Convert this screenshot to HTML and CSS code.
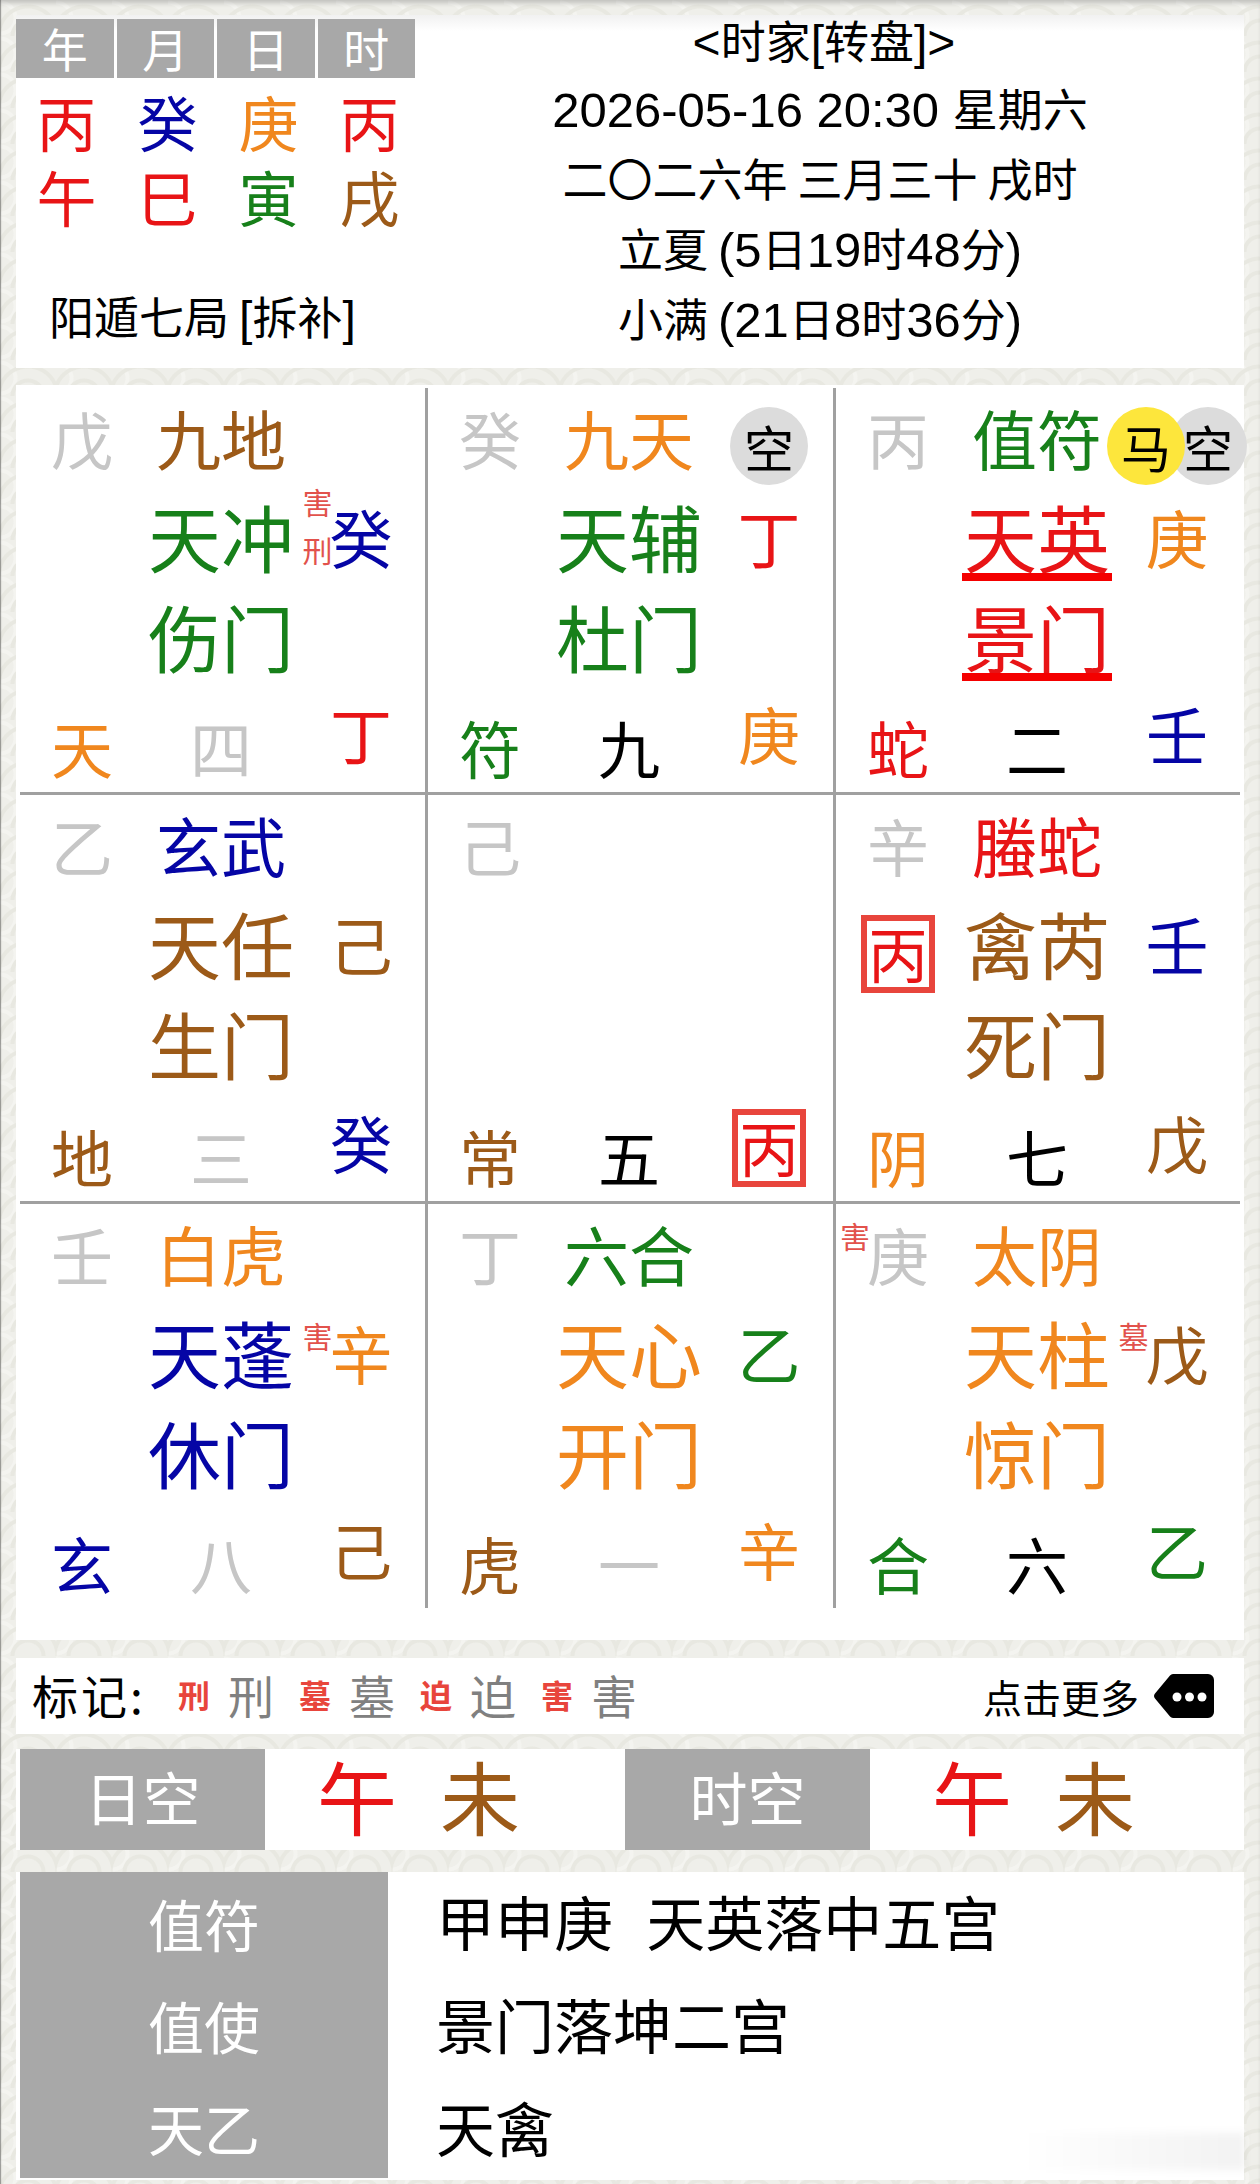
FILE: index.html
```html
<!DOCTYPE html>
<html lang="zh-CN">
<head>
  <meta charset="UTF-8" />
  <meta name="viewport" content="width=device-width, initial-scale=1.0"/>
  <title>时家转盘</title>
  <link rel="stylesheet" href="styles.css">
</head>
<body>
  <div class="page">

    <div class="panel top">
      <div class="bazi">
        <div class="bazi-head">
          <span>年</span><span>月</span><span>日</span><span>时</span>
        </div>
        <div class="bazi-body">
          <span class="red">丙</span><span class="blue">癸</span><span class="orange">庚</span><span class="red">丙</span>
          <span class="red">午</span><span class="red">巳</span><span class="green">寅</span><span class="brown">戌</span>
        </div>
        <div class="ju">阳遁七局 <span class="latin">[</span>拆补<span class="latin">]</span></div>
      </div>
      <div class="info-lines">
        <div class="title-line"><span class="latin">&lt;</span>时家<span class="latin">[</span>转盘<span class="latin">]&gt;</span></div>
        <div><span class="num">2026-05-16 20:30 </span>星期六</div>
        <div>二〇二六年 三月三十 戌时</div>
        <div>立夏 <span class="num">(5</span>日<span class="num">19</span>时<span class="num">48</span>分<span class="num">)</span></div>
        <div>小满 <span class="num">(21</span>日<span class="num">8</span>时<span class="num">36</span>分<span class="num">)</span></div>
      </div>
    </div>

    <div class="panel board">
      <!-- 巽四 -->
      <div class="cell">
        <span class="t gray">戊</span><span class="god brown">九地</span><span></span>
        <span></span><span class="star green">天冲</span><span class="g"><b class="blue">癸<i class="mark m-hai">害</i><i class="mark m-xing">刑</i></b></span>
        <span></span><span class="star green">伤门</span><span></span>
        <span class="b orange">天</span><span class="b gray">四</span><span class="b up red">丁</span>
      </div>
      <!-- 离九 -->
      <div class="cell">
        <span class="t gray">癸</span><span class="god orange">九天</span><span class="badges"><em class="kong">空</em></span>
        <span></span><span class="star green">天辅</span><span class="g red">丁</span>
        <span></span><span class="star green">杜门</span><span></span>
        <span class="b green">符</span><span class="b black">九</span><span class="b up orange">庚</span>
      </div>
      <!-- 坤二 -->
      <div class="cell no-right">
        <span class="t gray">丙</span><span class="god green">值符</span><span class="badges"><em class="ma">马</em><em class="kong">空</em></span>
        <span></span><span class="star red"><u>天英</u></span><span class="g orange">庚</span>
        <span></span><span class="star red"><u>景门</u></span><span></span>
        <span class="b red">蛇</span><span class="b black">二</span><span class="b up blue">壬</span>
      </div>
      <!-- 震三 -->
      <div class="cell">
        <span class="t gray">乙</span><span class="god blue">玄武</span><span></span>
        <span></span><span class="star brown">天任</span><span class="g brown">己</span>
        <span></span><span class="star brown">生门</span><span></span>
        <span class="b brown">地</span><span class="b gray">三</span><span class="b up blue">癸</span>
      </div>
      <!-- 中五 -->
      <div class="cell">
        <span class="t gray">己</span><span></span><span></span>
        <span></span><span></span><span></span>
        <span></span><span></span><span></span>
        <span class="b brown">常</span><span class="b black">五</span><span class="b up boxed-wrap red"><strong class="boxed">丙</strong></span>
      </div>
      <!-- 兑七 -->
      <div class="cell no-right">
        <span class="t gray">辛</span><span class="god red">螣蛇</span><span></span>
        <span class="g red low"><strong class="boxed">丙</strong></span><span class="star brown">禽芮</span><span class="g blue">壬</span>
        <span></span><span class="star brown">死门</span><span></span>
        <span class="b orange">阴</span><span class="b black">七</span><span class="b up brown">戊</span>
      </div>
      <!-- 艮八 -->
      <div class="cell no-bottom">
        <span class="t gray">壬</span><span class="god orange">白虎</span><span></span>
        <span></span><span class="star blue">天蓬</span><span class="g"><b class="orange">辛<i class="mark m-side">害</i></b></span>
        <span></span><span class="star blue">休门</span><span></span>
        <span class="b blue">玄</span><span class="b gray">八</span><span class="b up brown">己</span>
      </div>
      <!-- 坎一 -->
      <div class="cell no-bottom">
        <span class="t gray">丁</span><span class="god green">六合</span><span></span>
        <span></span><span class="star orange">天心</span><span class="g green">乙</span>
        <span></span><span class="star orange">开门</span><span></span>
        <span class="b brown">虎</span><span class="b gray">一</span><span class="b up orange">辛</span>
      </div>
      <!-- 乾六 -->
      <div class="cell no-right no-bottom">
        <span class="t"><b class="gray">庚<i class="mark m-top">害</i></b></span><span class="god orange">太阴</span><span></span>
        <span></span><span class="star orange">天柱</span><span class="g"><b class="brown">戊<i class="mark m-side">墓</i></b></span>
        <span></span><span class="star orange">惊门</span><span></span>
        <span class="b green">合</span><span class="b black">六</span><span class="b up green">乙</span>
      </div>
    </div>

    <div class="panel legend">
      <div class="legend-title">标记:</div>
      <div class="legend-items">
        <span class="tag"><small>刑</small>刑</span>
        <span class="tag"><small>墓</small>墓</span>
        <span class="tag"><small>迫</small>迫</span>
        <span class="tag"><small>害</small>害</span>
      </div>
      <div class="more">
        <span>点击更多</span>
        <svg class="more-icon" viewBox="0 0 60 44" width="60" height="44">
          <path d="M19 0H54a6 6 0 0 1 6 6V38a6 6 0 0 1-6 6H19a4 4 0 0 1-3-1.500L1 24.500a4 4 0 0 1 0-5L16 1.500A4 4 0 0 1 19 0Z" fill="#000"/>
          <circle cx="23" cy="23" r="4.500" fill="#fff"/>
          <circle cx="35.500" cy="23" r="4.500" fill="#fff"/>
          <circle cx="48" cy="23" r="4.500" fill="#fff"/>
        </svg>
      </div>
    </div>

    <div class="panel void">
      <div class="void-label">日空</div>
      <div class="void-vals first"><span class="red">午</span><span class="brown">未</span></div>
      <div class="void-label">时空</div>
      <div class="void-vals"><span class="red">午</span><span class="brown">未</span></div>
    </div>

    <div class="panel duty">
      <div class="duty-labels">
        <div>值符</div>
        <div>值使</div>
        <div>天乙</div>
      </div>
      <div class="duty-vals">
        <div class="spaced">甲申庚 天英落中五宫</div>
        <div>景门落坤二宫</div>
        <div>天禽</div>
      </div>
      <div class="watermark"></div>
    </div>

  </div>
</body>
</html>
```

FILE: styles.css
```css
* {
  box-sizing: border-box;
}

body {
  margin: 0;
  font-family: "Noto Sans CJK SC", "Noto Sans", sans-serif;
  color: #000;
}

.page {
  width: 1260px;
  height: 2184px;
  padding: 15px 16px 0;
  display: flex;
  flex-direction: column;
  background-color: #efefea;
  background-image:
    radial-gradient(circle at 50% 100%, transparent 13px, #e8e8e1 14px, #e8e8e1 17px, transparent 18px, transparent 27px, #e8e8e1 28px, #e8e8e1 31px, transparent 32px),
    radial-gradient(circle at 0 50%, transparent 13px, #f4f4f0 14px, #f4f4f0 17px, transparent 18px);
  background-size: 56px 36px;
  box-shadow: inset 0 5px 5px -2px rgba(0, 0, 0, 0.2), inset 2px 0 1px -1px rgba(0, 0, 0, 0.35);
}

.panel {
  background: #fff;
  flex: 0 0 auto;
}

/* colours */
.red { color: #e81416; }
.blue { color: #0505a5; }
.orange { color: #f0871e; }
.green { color: #17801a; }
.brown { color: #9c5a18; }
.gray { color: #c6c6c6; }
.black { color: #000; }

/* header */
.top {
  height: 353px;
  display: flex;
  background: linear-gradient(#f1f1f1, #fff 16px);
}

.bazi {
  width: 399px;
  padding-top: 4px;
}

.bazi-head {
  display: grid;
  grid-template-columns: repeat(4, 1fr);
  gap: 3px;
  height: 59px;
}

.bazi-head span {
  background: #a8a8a8;
  color: #fff;
  font-size: 46px;
  line-height: 56px;
  text-align: center;
}

.bazi-body {
  display: grid;
  grid-template-columns: repeat(4, 101px);
  grid-auto-rows: 75px;
  margin-top: 9px;
  font-size: 60px;
  line-height: 68px;
  text-align: center;
}

.ju {
  margin-top: 49px;
  padding-left: 33px;
  font-size: 45px;
  line-height: 60px;
  white-space: nowrap;
}

.latin {
  font-family: "Liberation Sans", sans-serif;
  font-size: 48px;
}

.num {
  font-family: "Liberation Sans", sans-serif;
  font-size: 49px;
}

.info-lines {
  flex: 1;
  padding: 0 19px 0 0;
  font-size: 45px;
  line-height: 70px;
  text-align: center;
  white-space: nowrap;
  margin-top: -10px;
}

.info-lines > div {
  height: 70px;
}

.info-lines > .title-line {
  height: 68px;
  padding-left: 8px;
}

/* nine palaces */
.board {
  height: 1255px;
  margin-top: 17px;
  padding: 3px 4px 0;
  display: grid;
  grid-template-columns: 408px 408px 404px;
  grid-template-rows: 407px 409px 404px;
}

.cell {
  display: grid;
  grid-template-columns: 124px 154px 126px;
  grid-template-rows: 99px 96px 104px 1fr;
  border-right: 3px solid #a0a0a0;
  border-bottom: 3px solid #a0a0a0;
}

.cell.no-right { border-right: none; }
.cell.no-bottom { border-bottom: none; }

.cell > span {
  display: flex;
  align-items: center;
  justify-content: center;
  white-space: nowrap;
}

.t { font-size: 62px; line-height: 1; }
.god { font-size: 65px; line-height: 1; }
.star { font-size: 73px; line-height: 1; }
.g { font-size: 63px; line-height: 1; }

.cell > .b {
  font-size: 62px;
  line-height: 1;
  height: 84px;
  align-self: end;
  margin-bottom: 3px;
}

.cell > .b.up {
  margin-bottom: 17px;
}

.cell > .b.boxed-wrap {
  padding-top: 12px;
}

.cell > .g.low {
  padding-top: 24px;
}

.cell > .badges {
  padding-top: 16px;
}

.cell b {
  position: relative;
  font-weight: 400;
}

.cell u {
  position: relative;
  text-decoration: none;
}

.cell u::after {
  content: "";
  position: absolute;
  left: -2px;
  right: -2px;
  bottom: -9px;
  height: 8px;
  background: #f40000;
}

.mark {
  position: absolute;
  font-style: normal;
  font-size: 30px;
  line-height: 30px;
  color: #e2524c;
  left: -27px;
}

.m-hai { top: -18px; }
.m-xing { top: 30px; }
.m-side { top: 0; }
.m-top { top: -3px; }

.badges em {
  width: 78px;
  height: 78px;
  flex: none;
  border-radius: 50%;
  font-style: normal;
  font-size: 50px;
  line-height: 78px;
  text-align: center;
  color: #000;
}

.kong { background: #dcdcdc; }

.ma {
  background: #fde63c;
  margin-right: -16px;
  position: relative;
  z-index: 1;
}

.boxed {
  display: block;
  width: 74px;
  height: 78px;
  border: 6px solid #e8453c;
  font-weight: 400;
  font-size: 60px;
  line-height: 62px;
  text-align: center;
}

/* legend */
.legend {
  height: 76px;
  margin-top: 18px;
  display: flex;
  align-items: center;
  padding-left: 16px;
  padding-bottom: 5px;
}

.legend-title {
  width: 146px;
  font-size: 46px;
  line-height: 1;
  letter-spacing: 3px;
}

.legend-items {
  display: flex;
  gap: 25px;
}

.tag {
  display: flex;
  align-items: center;
  gap: 18px;
  color: #808080;
  font-size: 46px;
  line-height: 1;
}

.tag small {
  font-size: 32px;
  font-weight: 700;
  color: #e8453c;
}

.more {
  margin-left: auto;
  padding-right: 30px;
  display: flex;
  align-items: center;
  gap: 15px;
  font-size: 39px;
  line-height: 1;
  margin-bottom: -5px;
}

.more-icon {
  display: block;
}

/* kong wang */
.void {
  height: 101px;
  margin-top: 15px;
  padding-left: 4px;
  display: flex;
}

.void-label {
  width: 245px;
  background: #a8a8a8;
  color: #fff;
  font-size: 58px;
  line-height: 94px;
  text-align: center;
}

.void-vals {
  flex: 1;
  display: flex;
  gap: 43px;
  padding-left: 62px;
  font-size: 80px;
  line-height: 90px;
}

.void-vals.first {
  flex: 0 0 360px;
  padding-left: 52px;
}

/* duty */
.duty {
  height: 308px;
  margin-top: 22px;
  padding-left: 4px;
  display: flex;
  position: relative;
}

.duty-labels {
  width: 368px;
  height: 306px;
  background: #a8a8a8;
  color: #fff;
  font-size: 56px;
  line-height: 100px;
  text-align: center;
  padding-top: 1px;
}

.duty-labels div {
  height: 102px;
}

.duty-vals {
  padding-left: 48px;
  margin-top: -3px;
  font-size: 59px;
  line-height: 103px;
  white-space: nowrap;
}

.spaced {
  word-spacing: 20px;
}

.watermark {
  position: absolute;
  right: 0;
  bottom: 10px;
  width: 224px;
  height: 37px;
  background: linear-gradient(90deg, rgba(0, 0, 0, 0), rgba(0, 0, 0, 0.05));
  filter: blur(4px);
}
```
